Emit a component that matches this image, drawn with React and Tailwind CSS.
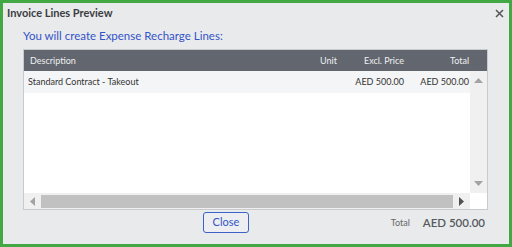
import React from "react";

const lines = [
  { description: "Standard Contract - Takeout", unit: "", price: "AED 500.00", total: "AED 500.00" },
];

const App = () => {
  return (
    <div
      className="w-[512px] h-[247px] border-[3px] border-[#41a843] bg-[#e9eaec] flex flex-col"
      style={{ fontFamily: "Lato, 'Open Sans', sans-serif" }}
    >
      {/* title bar */}
      <div className="flex items-center justify-between h-[19px] pl-[4px] pr-[5px] mt-[1px]">
        <span className="text-[11px] font-bold text-[#3a3d42]">Invoice Lines Preview</span>
        <svg width="9" height="9" viewBox="0 0 9 9" className="text-[#555]">
          <path d="M1 1 L8 8 M8 1 L1 8" stroke="currentColor" strokeWidth="1.5" />
        </svg>
      </div>

      <div className="pl-[20px] pr-[21px] flex flex-col">
        <h2 className="text-[11.5px] leading-[18px] text-[#3354c8] mt-[4px] mb-[4px]">
          You will create Expense Recharge Lines:
        </h2>

        {/* grid */}
        <div className="border border-[#c9cacd] h-[161px] flex flex-col bg-white">
          <div className="h-[21px] bg-[#62666e] text-[#eef0f2] text-[9px] flex items-center shrink-0">
            <div className="flex-1 pl-[6px]">Description</div>
            <div className="w-[60px] text-right">Unit</div>
            <div className="w-[67px] text-right">Excl. Price</div>
            <div className="w-[65px] text-right">Total</div>
            <div className="w-[18px]" />
          </div>

          <div className="flex-1 grid grid-cols-[1fr_17px] grid-rows-[1fr_16px]">
            <div className="bg-white">
              {lines.map((l, i) => (
                <div key={i} className="h-[22px] bg-[#f4f5f7] text-[9px] text-[#333] flex items-center">
                  <div className="flex-1 pl-[4px]">{l.description}</div>
                  <div className="w-[60px] text-right">{l.unit}</div>
                  <div className="w-[67px] text-right">{l.price}</div>
                  <div className="w-[65px] text-right">{l.total}</div>
                  <div className="w-[1px]" />
                </div>
              ))}
            </div>
            {/* vertical scrollbar */}
            <div className="bg-[#f0f0f0] flex flex-col justify-between items-center py-[7px]">
              <svg width="9" height="5" viewBox="0 0 9 5"><path d="M0 5 L4.5 0 L9 5 Z" fill="#a3a3a3" /></svg>
              <svg width="9" height="5" viewBox="0 0 9 5"><path d="M0 0 L4.5 5 L9 0 Z" fill="#a3a3a3" /></svg>
            </div>
            {/* horizontal scrollbar */}
            <div className="bg-[#f0f0f0] flex items-center px-[6px] gap-[6px]">
              <svg width="5" height="9" viewBox="0 0 5 9"><path d="M5 0 L0 4.5 L5 9 Z" fill="#a3a3a3" /></svg>
              <div className="flex-1 h-[13px] bg-[#c1c1c1]" />
              <svg width="5" height="9" viewBox="0 0 5 9"><path d="M0 0 L5 4.5 L0 9 Z" fill="#505050" /></svg>
            </div>
            <div className="bg-white" />
          </div>
        </div>

        {/* footer */}
        <div className="flex items-center mt-[2px]">
          <button className="ml-[180px] h-[21px] w-[46px] border border-[#3a62c9] rounded-[3px] text-[11px] text-[#3355c4] bg-[#eceef2]">
            Close
          </button>
          <div className="flex-1" />
          <span className="text-[9px] text-[#666] mr-[13px]">Total</span>
          <span className="text-[11.5px] text-[#555a61] font-semibold mr-[3px]">AED 500.00</span>
        </div>
      </div>
    </div>
  );
};

export default App;
